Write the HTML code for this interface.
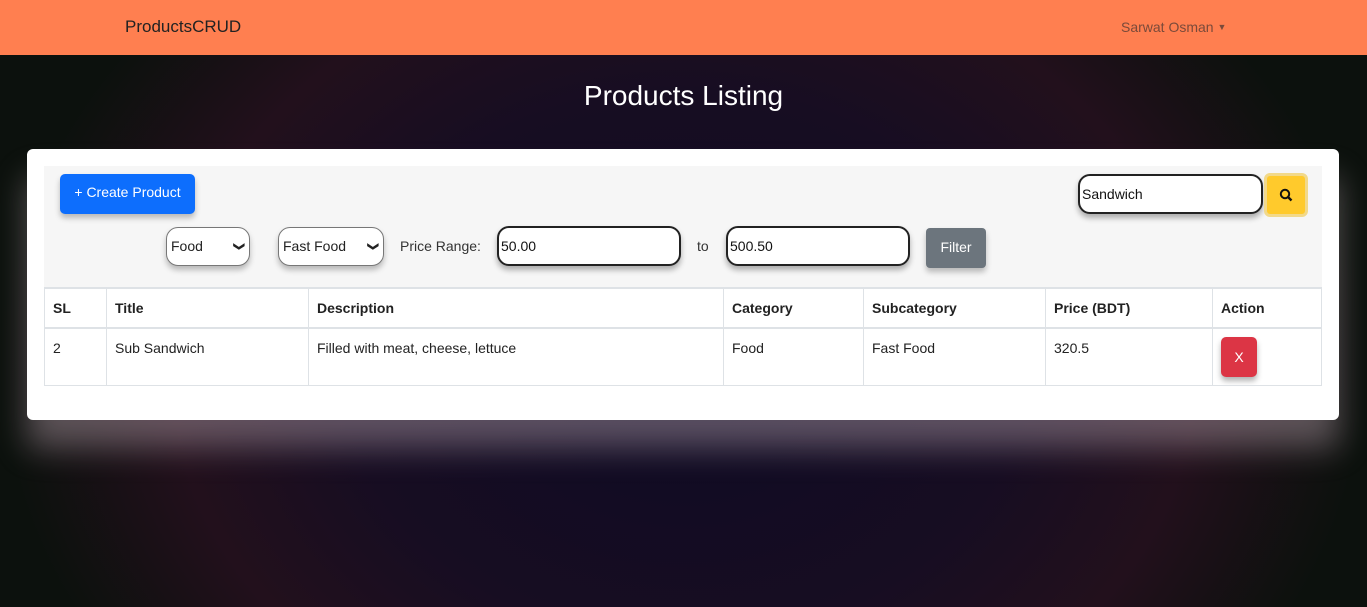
<!DOCTYPE html>
<html><head><style>
*{box-sizing:border-box;margin:0;padding:0}
body{width:1367px;height:607px;overflow:hidden;position:relative;font-family:"Liberation Sans",sans-serif;
background:radial-gradient(ellipse 50% 90% at 50% 60%,#0e0b24 0%,#170d22 50%,#22101c 75%,#0c110d 100%);}
.nav{position:absolute;left:0;top:0;width:1367px;height:55px;background:#ff7f50}
.abs{position:absolute}
.card{position:absolute;left:27px;top:149px;width:1312px;height:271px;background:#fff;border-radius:6px;box-shadow:0 28px 32px rgba(200,180,190,0.4)}
.panel{position:absolute;left:44px;top:166px;width:1278px;height:122px;background:#f6f6f6}
.inp{position:absolute;background:#fff;border:2px solid #222;border-radius:12px;box-shadow:0 4px 6px rgba(0,0,0,.3);font-size:14px;color:#111;padding-left:2px;line-height:36px}
.sel{position:absolute;background:#fff;border:1px solid #777;border-radius:12px;box-shadow:0 4px 6px rgba(0,0,0,.25);font-size:14px;color:#222;padding-left:4px;line-height:37px}
.chev{position:absolute;right:6px;top:0;font-size:11px;display:inline-block;transform:rotate(90deg);font-weight:bold}
table{position:absolute;left:44px;top:287px;width:1278px;border-collapse:collapse;font-size:14px;color:#222}
td,th{border:1px solid #dee2e6;text-align:left;padding:0 8px;vertical-align:top}
th{height:40px;line-height:38px;font-weight:bold;border-top:2px solid #dee2e6;border-bottom:2px solid #dee2e6}
td{height:57px;padding-top:11px}
</style></head><body>
<div class="nav">
<div class="abs" style="left:125px;top:17px;font-size:17px;color:#222">ProductsCRUD</div>
<div class="abs" style="left:1121px;top:19px;font-size:14px;color:#7a4a3a">Sarwat Osman <span style="font-size:9px;vertical-align:2px">▼</span></div>
</div>
<div class="abs" style="left:0;width:1367px;top:80px;text-align:center;color:#fff;font-size:28px">Products Listing</div>
<div class="card"></div>
<div class="panel"></div>
<div class="abs" style="left:60px;top:174px;width:135px;height:40px;background:#0d6efd;border-radius:5px;color:#fff;font-size:14px;line-height:37px;text-align:center;box-shadow:0 4px 6px rgba(0,0,0,.25)">+ Create Product</div>
<div class="inp" style="left:1078px;top:174px;width:185px;height:40px">Sandwich</div>
<div class="abs" style="left:1264px;top:173px;width:44px;height:44px;background:#ffca2c;border:3px solid #f2d98a;border-radius:6px">
<svg width="38" height="38" viewBox="0 0 38 38"><circle cx="18" cy="18" r="4.2" fill="none" stroke="#111" stroke-width="2"/><path d="M21 21l3.5 3.5" stroke="#111" stroke-width="2.4"/></svg></div>
<div class="sel" style="left:166px;top:227px;width:84px;height:39px">Food<span class="chev">❯</span></div>
<div class="sel" style="left:278px;top:227px;width:106px;height:39px">Fast Food<span class="chev">❯</span></div>
<div class="abs" style="left:400px;top:238px;font-size:14px;color:#333">Price Range:</div>
<div class="inp" style="left:497px;top:226px;width:184px;height:40px">50.00</div>
<div class="abs" style="left:697px;top:238px;font-size:14px;color:#333">to</div>
<div class="inp" style="left:726px;top:226px;width:184px;height:40px">500.50</div>
<div class="abs" style="left:926px;top:228px;width:60px;height:40px;background:#6c757d;border-radius:4px;color:#fff;font-size:14px;line-height:38px;text-align:center;box-shadow:0 4px 6px rgba(0,0,0,.25)">Filter</div>
<table>
<tr><th style="width:62px">SL</th><th style="width:202px">Title</th><th style="width:415px">Description</th><th style="width:140px">Category</th><th style="width:182px">Subcategory</th><th style="width:167px">Price (BDT)</th><th>Action</th></tr>
<tr><td>2</td><td>Sub Sandwich</td><td>Filled with meat, cheese, lettuce</td><td>Food</td><td>Fast Food</td><td>320.5</td><td style="padding-top:8px"><div style="width:36px;height:40px;background:#dc3545;border-radius:5px;color:#fff;text-align:center;line-height:40px;box-shadow:0 4px 6px rgba(0,0,0,.3)">X</div></td></tr>
</table>
</body></html>
